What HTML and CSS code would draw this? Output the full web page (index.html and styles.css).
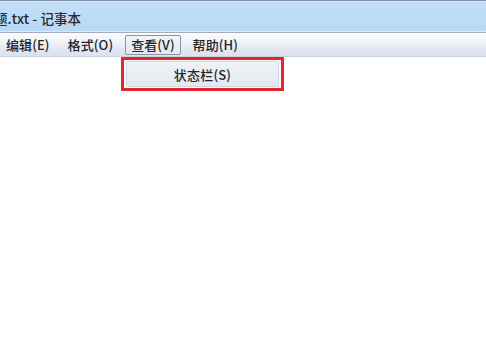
FILE: index.html
```html
<!DOCTYPE html>
<html lang="zh-CN">
<head>
<meta charset="utf-8">
<title>记事本</title>
<link rel="stylesheet" href="styles.css">
</head>
<body>
<div class="window">
  <div class="titlebar">
    <span class="title">题.txt - 记事本</span>
  </div>
  <div class="menubar">
    <span class="menu-item">编辑(E)</span>
    <span class="menu-item">格式(O)</span>
    <span class="menu-item active">查看(V)</span>
    <span class="menu-item">帮助(H)</span>
  </div>
  <div class="content"></div>
  <div class="dropdown">
    <div class="dropdown-item">状态栏(S)</div>
  </div>
</div>
</body>
</html>
```

FILE: styles.css
```css
html, body {
  margin: 0;
  padding: 0;
  background: #ffffff;
}

body {
  width: 486px;
  height: 339px;
  overflow: hidden;
  font-family: "Noto Sans CJK SC", "Noto Sans", sans-serif;
}

.window {
  position: relative;
  height: 339px;
  display: flex;
  flex-direction: column;
}

.titlebar {
  height: 31px;
  border-top: 1px solid #8593a4;
  border-bottom: 1px solid #a3acb8;
  box-shadow: inset 0 1px 0 #d6e8fa, inset 0 -1px 0 #d9e9f8;
  background: linear-gradient(#c3def8, #b9d8f5);
  display: flex;
  align-items: center;
  overflow: hidden;
}

.title {
  margin-left: -6px;
  margin-top: 2px;
  font-size: 13.5px;
  font-weight: 500;
  letter-spacing: 0.1px;
  color: #2a2a2a;
  white-space: nowrap;
}

.menubar {
  height: 23px;
  display: flex;
  align-items: center;
  gap: 6px;
  background: linear-gradient(#fafbfd 0%, #f2f4f9 35%, #e1e6f1 75%, #dbe1ee 100%);
  border-bottom: 1px solid #c9cfdb;
}

.menu-item {
  padding: 0 5px;
  height: 18px;
  line-height: 18px;
  border: 1px solid transparent;
  border-radius: 2px;
  font-size: 13px;
  font-weight: 500;
  letter-spacing: 0.1px;
  color: #262626;
  white-space: nowrap;
}

.menu-item.active {
  border-color: #8a93a2;
  background: linear-gradient(#f4f5f8, #e4e7ee);
}

.content {
  flex: 1;
  background: #ffffff;
}

.dropdown {
  position: absolute;
  left: 121px;
  top: 57px;
  width: 153px;
  height: 26px;
  border: 3px solid #e3262b;
  background: #f7f8fb;
  padding: 1px 2px;
  box-sizing: content-box;
  display: flex;
}

.dropdown-item {
  flex: 1;
  border: 1px solid #cfd7e3;
  border-radius: 2px;
  background: linear-gradient(#eef2f7, #e4e9f1);
  display: flex;
  align-items: center;
  justify-content: center;
  font-size: 13px;
  font-weight: 500;
  letter-spacing: 0.2px;
  color: #262626;
}
```
